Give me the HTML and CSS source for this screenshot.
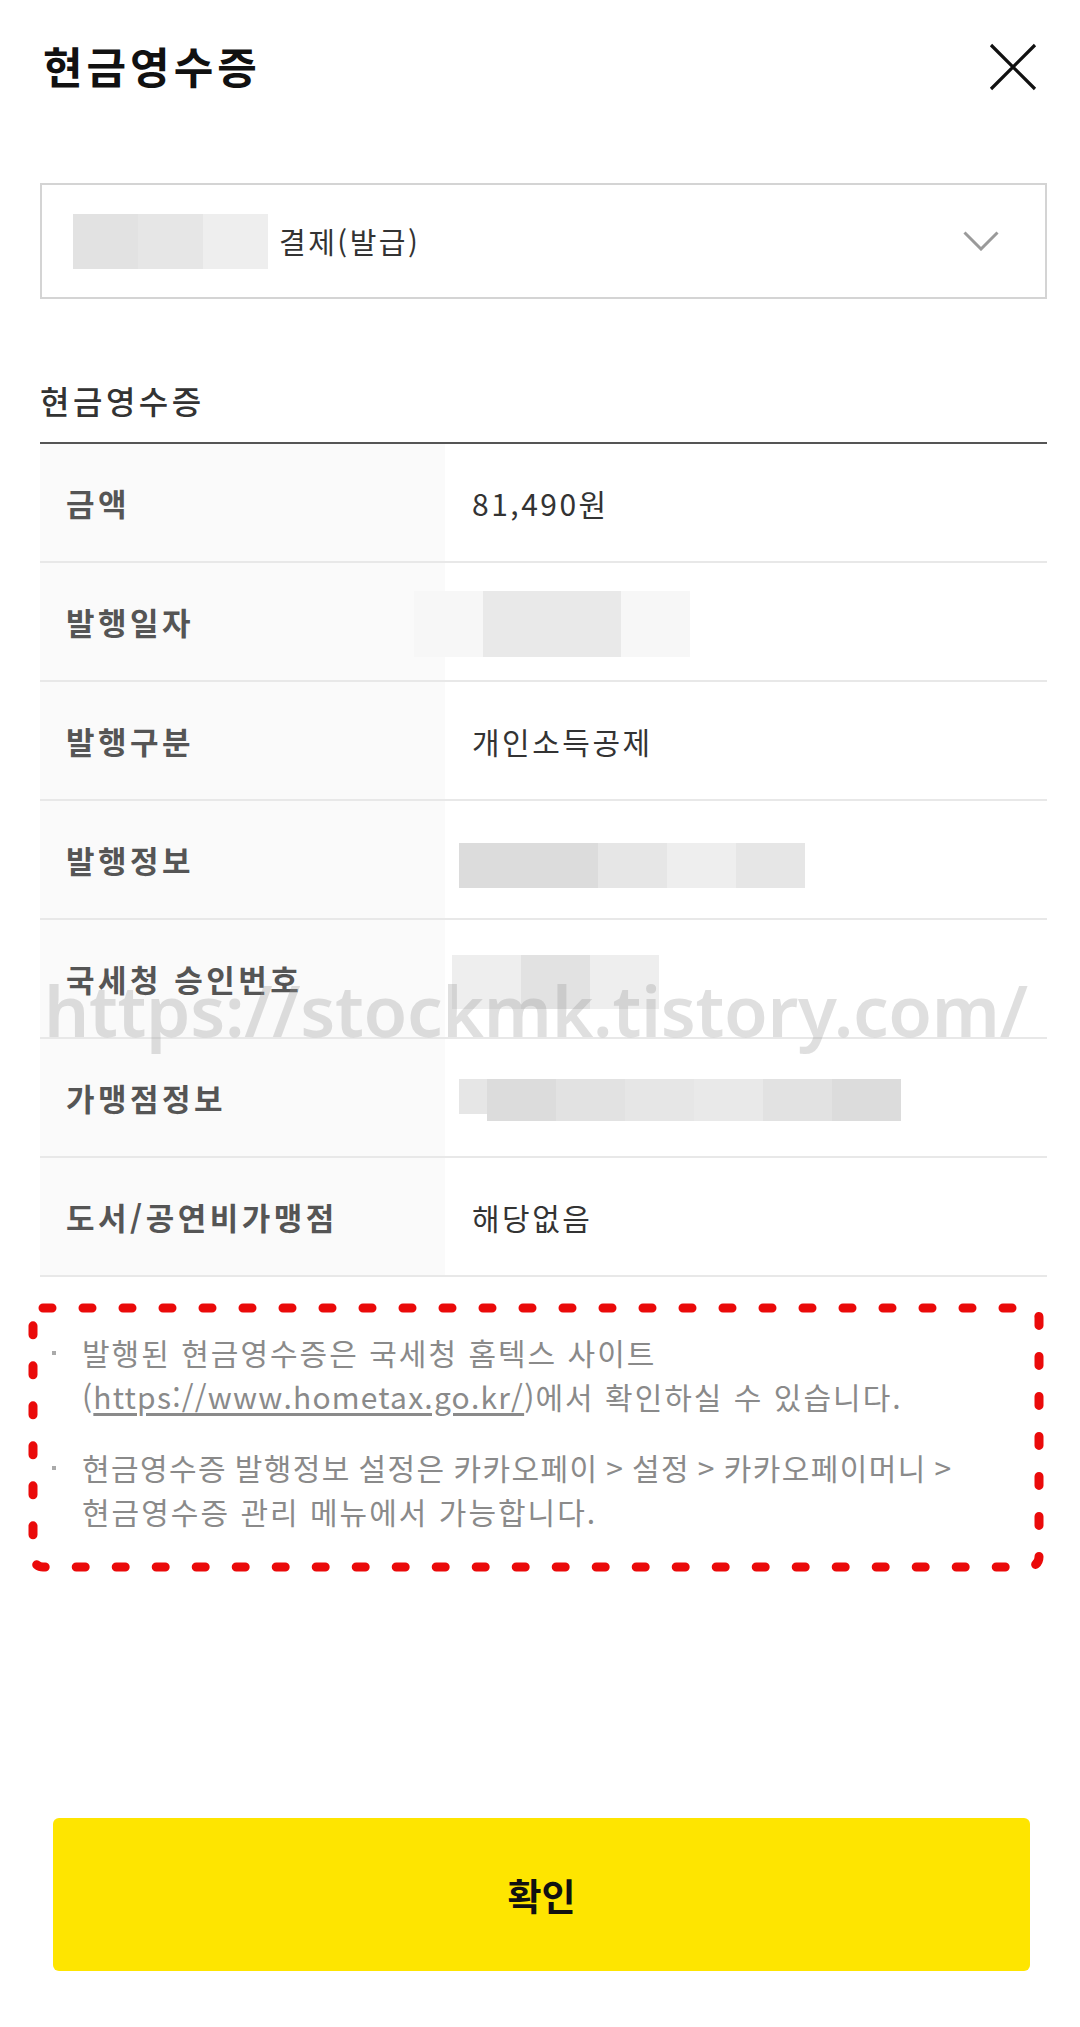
FILE: index.html
```html
<!DOCTYPE html>
<html lang="ko">

<head>
  <meta charset="UTF-8">
  <title>현금영수증</title>
  <link rel="stylesheet" href="styles.css">
</head>
<body>
  <div class="page">
    <header class="top">
      <h1 class="title">현금영수증</h1>
      <button class="close" type="button">
        <svg width="48" height="48" viewBox="0 0 48 48">
          <path d="M2 2 L46 46 M46 2 L2 46" stroke="#111" stroke-width="3.2" fill="none"/>
        </svg>
      </button>
    </header>

    <div class="select">
      <span class="mosaic sel-mosaic">
        <i class="m-a"></i><i class="m-b"></i><i class="m-e"></i>
      </span>
      <span class="select-text">결제(발급)</span>
      <svg class="chevron" width="36" height="20" viewBox="0 0 36 20">
        <path d="M1.5 1.5 L18 18 L34.5 1.5" stroke="#9a9a9a" stroke-width="3" fill="none"/>
      </svg>
    </div>

    <h2 class="section-title">현금영수증</h2>

    <div class="table-wrap">
      <div class="info">
        <div class="row">
          <div class="label">금액</div>
          <div class="value">81,490원</div>
        </div>
        <div class="row">
          <div class="label">발행일자</div>
          <div class="value">
            <span class="mosaic date-mosaic"><i class="m-f"></i><i class="m-c"></i><i class="m-c"></i><i class="m-f"></i></span>
          </div>
        </div>
        <div class="row">
          <div class="label">발행구분</div>
          <div class="value">개인소득공제</div>
        </div>
        <div class="row">
          <div class="label">발행정보</div>
          <div class="value">
            <span class="mosaic issue-mosaic"><i class="m-d wide"></i><i class="m-b"></i><i class="m-e"></i><i class="m-b"></i></span>
          </div>
        </div>
        <div class="row">
          <div class="label">국세청 승인번호</div>
          <div class="value">
            <span class="mosaic nts-mosaic"><i class="m-e"></i><i class="m-a"></i><i class="m-e"></i></span>
          </div>
        </div>
        <div class="row">
          <div class="label">가맹점정보</div>
          <div class="value">
            <span class="mosaic shop-mosaic"><i class="m-b narrow"></i><i class="m-d"></i><i class="m-a"></i><i class="m-b"></i><i class="m-c"></i><i class="m-a"></i><i class="m-d"></i></span>
          </div>
        </div>
        <div class="row">
          <div class="label">도서/공연비가맹점</div>
          <div class="value">해당없음</div>
        </div>
      </div>
      <div class="watermark">https://stockmk.tistory.com/</div>
    </div>

    <div class="notes">
      <svg class="notes-frame" width="100%" height="100%">
        <rect x="0" y="0" width="100%" height="100%" rx="10" ry="10" fill="none" stroke="#ea0a0a" stroke-width="9" stroke-dasharray="9 31" stroke-linecap="round"/>
      </svg>
      <ul class="notes-list">
        <li><span>발행된 현금영수증은 국세청 홈텍스 사이트<br><span class="link">(<u>https://www.hometax.go.kr/</u>)</span>에서 확인하실 수 있습니다.</span></li>
        <li><span><span class="path">현금영수증 발행정보 설정은 카카오페이 &gt; 설정 &gt; 카카오페이머니 &gt;</span><br>현금영수증 관리 메뉴에서 가능합니다.</span></li>
      </ul>
    </div>

    <button class="confirm" type="button">확인</button>
  </div>
</body>

</html>
```

FILE: styles.css
```css
* {
  margin: 0;
  padding: 0;
  list-style: none;
  box-sizing: border-box;
}

body {
  background: #fff;
  font-family: "Noto Sans CJK KR", "Noto Sans", sans-serif;
  color: #333;
}

.page {
  min-height: 2027px;
  padding: 0 33px 56px 40px;
  display: flex;
  flex-direction: column;
}

/* header */
.top {
  height: 134px;
  display: flex;
  align-items: center;
  justify-content: space-between;
}

.title {
  font-size: 43px;
  font-weight: 700;
  color: #111;
  letter-spacing: 4px;
  margin-left: 3px;
  margin-top: -4px;
}

.close {
  border: 0;
  background: none;
  width: 48px;
  height: 48px;
  margin-right: 10px;
}

.close svg {
  display: block;
}

/* select */
.select {
  margin-top: 49px;
  height: 116px;
  border: 2px solid #d4d4d4;
  display: flex;
  align-items: center;
  padding: 0 46px 0 31px;
}

.select-text {
  font-size: 29px;
  color: #333;
  letter-spacing: 2.5px;
  margin-left: 11px;
  flex: 1;
}

.chevron {
  display: block;
}

/* mosaic (blurred values) */
.mosaic {
  display: flex;
}

.mosaic i {
  display: block;
  width: 69px;
  height: 100%;
}

.mosaic i.wide {
  width: 139px;
}

.mosaic i.narrow {
  width: 28px;
}

.m-a { background: #e2e2e2; }
.m-b { background: #e6e6e6; }
.m-c { background: #e9e9e9; }
.m-d { background: #dcdcdc; }
.m-e { background: #eeeeee; }
.m-f { background: #f7f7f7; }

.sel-mosaic {
  height: 55px;
}

.sel-mosaic i {
  width: 65px;
}

.date-mosaic {
  height: 66px;
  margin-left: -58px;
  margin-top: 5px;
}

.issue-mosaic {
  height: 45px;
  margin-left: -13px;
  margin-top: 12px;
}

.nts-mosaic {
  height: 54px;
  margin-left: -20px;
  margin-top: 6px;
}

.shop-mosaic {
  height: 42px;
  margin-left: -13px;
  margin-top: 4px;
}

.shop-mosaic i.narrow {
  height: 35px;
}

/* table */
.section-title {
  margin-top: 79px;
  font-size: 32px;
  font-weight: 500;
  line-height: 44px;
  color: #333;
  letter-spacing: 3.5px;
  padding-bottom: 20px;
  border-bottom: 2px solid #555;
}

.table-wrap {
  position: relative;
}

.row {
  display: flex;
  height: 119px;
  border-bottom: 2px solid #e8e8e8;
}

.label {
  width: 405px;
  background: #fafafa;
  display: flex;
  align-items: center;
  padding-left: 26px;
  font-size: 31px;
  font-weight: 700;
  color: #555;
  letter-spacing: 3.5px;
}

.value {
  flex: 1;
  display: flex;
  align-items: center;
  padding-left: 27px;
  font-size: 30px;
  color: #333;
  letter-spacing: 2.5px;
}

.watermark {
  position: absolute;
  left: 4px;
  top: 530px;
  font-family: "Noto Sans", sans-serif;
  font-size: 71px;
  font-weight: 600;
  letter-spacing: -0.3px;
  line-height: 1;
  color: rgba(150, 150, 150, 0.3);
  white-space: nowrap;
  pointer-events: none;
}

/* notes */
.notes {
  position: relative;
  margin: 31px 8px 0 -7px;
  padding: 22px 20px 34px 19px;
}

.notes-frame {
  position: absolute;
  left: 0;
  top: 0;
  overflow: visible;
}

.notes-list li {
  display: flex;
  font-size: 30px;
  line-height: 44px;
  color: #8a8a8a;
  letter-spacing: 2px;
  white-space: nowrap;
}

.notes-list li + li {
  margin-top: 27px;
}

.notes-list li::before {
  content: "";
  flex: none;
  width: 4px;
  height: 4px;
  background: #aaa;
  margin: 21px 26px 0 0;
}

.notes-list .link {
  letter-spacing: 1.2px;
}

.notes-list .path {
  letter-spacing: 1.4px;
  word-spacing: -2px;
}

.notes-list u {
  text-underline-offset: 4px;
}

/* button */
.confirm {
  margin: auto 17px 0 13px;
  height: 153px;
  border: 0;
  border-radius: 6px;
  background: #fee500;
  font-family: "Noto Sans CJK KR", sans-serif;
  font-size: 37px;
  font-weight: 700;
  color: #111;
}
```
